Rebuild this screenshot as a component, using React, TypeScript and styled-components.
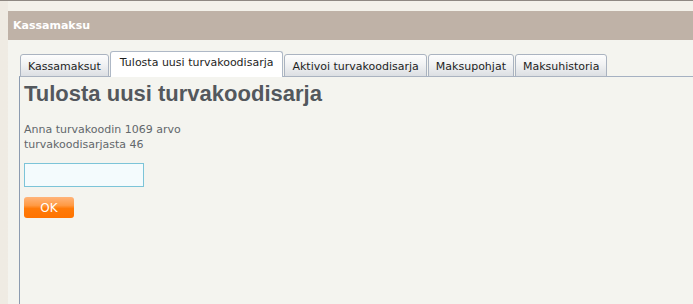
import React, { useState } from 'react';
import styled, { createGlobalStyle } from 'styled-components';

const GlobalStyle = createGlobalStyle`
	html, body {
		margin: 0;
		padding: 0;
		height: 100%;
	}
	body {
		background: #f4f3ee;
		font-family: 'DejaVu Sans', Verdana, sans-serif;
		font-size: 11px;
		color: #5f6468;
	}
	#root {
		height: 100%;
	}
`;

const tabs = [
	'Kassamaksut',
	'Tulosta uusi turvakoodisarja',
	'Aktivoi turvakoodisarja',
	'Maksupohjat',
	'Maksuhistoria',
];

export default function App() {
	const [active, setActive] = useState(1);
	const [code, setCode] = useState('');

	return (
		<>
			<GlobalStyle />
			<Page>
				<Main>
					<Header>Kassamaksu</Header>
					<Body>
						<TabBar>
							{tabs.map((t, i) => (
								<Tab key={t} $active={i === active} onClick={() => setActive(i)}>
									{t}
								</Tab>
							))}
						</TabBar>
						<Panel>
							<Title>Tulosta uusi turvakoodisarja</Title>
							<Info>
								Anna turvakoodin 1069 arvo
								<br />
								turvakoodisarjasta 46
							</Info>
							<CodeInput value={code} onChange={(e) => setCode(e.target.value)} />
							<OkButton type="button">OK</OkButton>
						</Panel>
					</Body>
				</Main>
			</Page>
		</>
	);
}

const Page = styled.div`
	display: flex;
	height: 100%;
	box-sizing: border-box;
	border-top: 1px solid #8e8882;
	background: linear-gradient(90deg, #efebe3, #f3f1ea);
`;

const Main = styled.div`
	flex: 1;
	display: flex;
	flex-direction: column;
	margin-left: 8px;
	padding-top: 10px;
	background: linear-gradient(180deg, #f3f1ea 0, #f3f1ea 10px, #f4f4ef 10px);
`;

const Header = styled.div`
	height: 29px;
	line-height: 29px;
	padding-left: 5px;
	background: #bfb2a7;
	color: #ffffff;
	font-weight: bold;
	font-size: 11px;
`;

const Body = styled.div`
	flex: 1;
	display: flex;
	flex-direction: column;
	padding: 11px 0 0 11px;
`;

const TabBar = styled.div`
	display: flex;
	align-items: flex-end;
	gap: 1px;
	padding-left: 1px;
	margin-bottom: -1px;
	position: relative;
	z-index: 1;
`;

const Tab = styled.div<{ $active?: boolean }>`
	box-sizing: border-box;
	height: ${(p) => (p.$active ? '26px' : '23px')};
	padding: ${(p) => (p.$active ? '4px 9px 0' : '5px 7px 0')};
	border: 1px solid ${(p) => (p.$active ? '#aeb8c6' : '#aab3c0')};
	border-bottom: ${(p) => (p.$active ? 'none' : '1px solid #aab3c0')};
	border-radius: 3px 3px 0 0;
	background: ${(p) =>
		p.$active ? '#ffffff' : 'linear-gradient(180deg, #fdfdfd 0%, #f1f2f3 45%, #dcdfe3 100%)'};
	color: #1e1e1e;
	font-size: 11px;
	line-height: 14px;
	white-space: nowrap;
	cursor: pointer;
`;

const Panel = styled.div`
	flex: 1;
	border-left: 1px solid #8c9bb0;
	border-top: 1px solid #a5b1c2;
	padding: 5px 4px 0;
`;

const Title = styled.h1`
	margin: 0 0 16px;
	font-family: 'Liberation Sans', Arial, sans-serif;
	font-size: 22px;
	line-height: 24px;
	font-weight: bold;
	color: #53585d;
`;

const Info = styled.p`
	margin: 0 0 11px;
	font-size: 11px;
	line-height: 15px;
	color: #62676b;
`;

const CodeInput = styled.input`
	display: block;
	box-sizing: border-box;
	width: 120px;
	height: 24px;
	margin: 0 0 10px;
	padding: 2px 4px;
	border: 1px solid #7cc4d8;
	background: #f4fbfd;
	font-family: 'DejaVu Sans', Verdana, sans-serif;
	font-size: 11px;
	outline: none;
`;

const OkButton = styled.button`
	display: block;
	width: 50px;
	height: 21px;
	padding: 0;
	border: none;
	border-radius: 3px;
	background: linear-gradient(180deg, #ffb47a 0%, #ff9a44 40%, #ff7a08 55%, #ff7300 100%);
	color: #ffffff;
	font-family: 'DejaVu Sans', Verdana, sans-serif;
	font-size: 12px;
	cursor: pointer;
`;
